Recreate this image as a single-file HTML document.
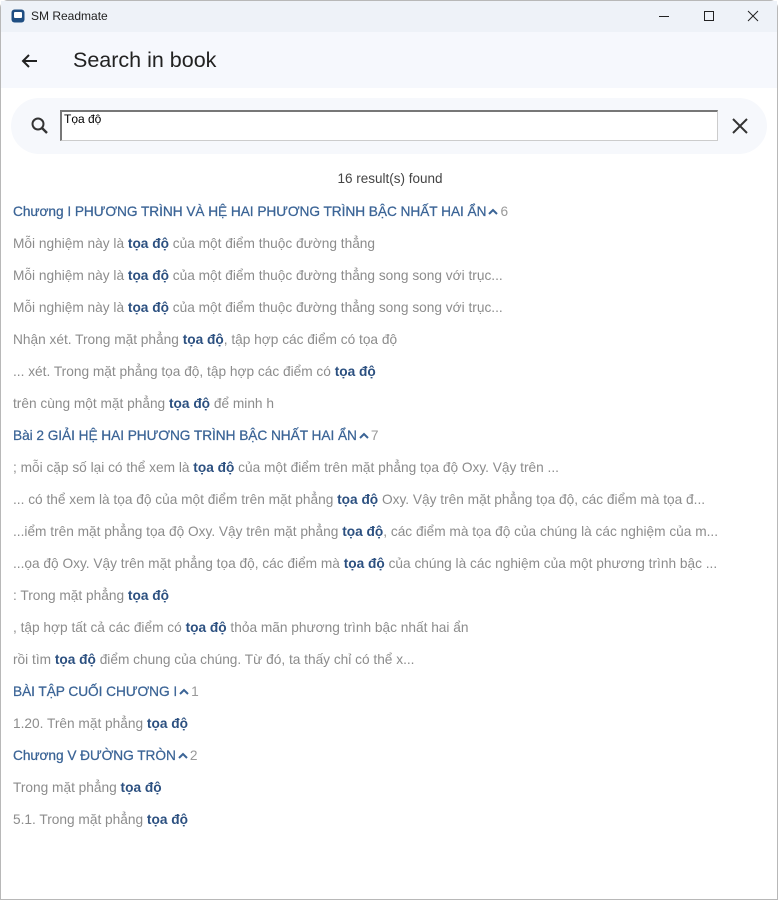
<!DOCTYPE html>
<html><head><meta charset="utf-8"><style>
*{margin:0;padding:0;box-sizing:border-box}
body{width:778px;height:900px;background:#fff;font-family:"Liberation Sans","Noto Sans CJK SC",sans-serif;position:relative;overflow:hidden;border:1px solid #b8b8b8;border-radius:8px 8px 0 0}
.tb{position:absolute;left:0;top:0;width:776px;height:31px;background:#eef2f8}
.tb .t{position:absolute;left:30px;top:8px;font-size:12px;color:#222}
.ab{position:absolute;left:0;top:31px;width:776px;height:56px;background:#f6f8fd}
.ab .h{position:absolute;left:72px;top:16px;font-size:21.5px;color:#222}
.pill{position:absolute;left:10px;top:97px;width:756px;height:56px;background:#f6f8fc;border-radius:28px}
.inp{position:absolute;left:59px;top:109px;width:658px;height:31px;background:#fff;border:1px solid #ccc;border-top:2px solid #777;border-left:2px solid #777;font-size:12px;padding-left:2px;line-height:14px}
.cnt{position:absolute;left:0;width:778px;top:170px;text-align:center;font-size:13.5px;color:#444}
.l{position:absolute;left:12px;font-size:13.7px;white-space:nowrap;color:#8c8c8c}
.l b{color:#2c5080}
.hd{color:#3b6496;-webkit-text-stroke:0.25px #3b6496;letter-spacing:-0.05px}
.hd span{color:#999;-webkit-text-stroke:0}
.hd svg{vertical-align:1px;margin:0 1px}
</style></head><body>
<div class="tb">
<svg style="position:absolute;left:10px;top:8px" width="14" height="14"><rect x="0.5" y="0.5" width="13" height="13" rx="3" fill="#1f4e82"/><rect x="3" y="3" width="8" height="6" rx="1" fill="#fff"/></svg>
<div class="t">SM Readmate</div>
<svg style="position:absolute;left:650px;top:8px" width="120" height="16"><line x1="8" y1="7.5" x2="18" y2="7.5" stroke="#222"/><rect x="53.5" y="2.5" width="9" height="9" fill="none" stroke="#222"/><path d="M97 2L107 12M107 2L97 12" stroke="#222"/></svg>
</div>
<div class="ab">
<svg style="position:absolute;left:19px;top:19px" width="20" height="20"><path d="M17 10H3M9 4L3 10L9 16" stroke="#222" stroke-width="2" fill="none"/></svg>
<div class="h">Search in book</div>
</div>
<div class="pill"></div>
<svg style="position:absolute;left:29px;top:115px" width="20" height="20"><circle cx="8" cy="8" r="5.5" stroke="#333" stroke-width="2" fill="none"/><path d="M12 12L17 17" stroke="#333" stroke-width="2.4"/></svg>
<div class="inp">Tọa độ</div>
<svg style="position:absolute;left:730px;top:116px" width="18" height="18"><path d="M2 2L16 16M16 2L2 16" stroke="#333" stroke-width="2"/></svg>
<div class="cnt">16 result(s) found</div>
<div class="l hd" style="top:203px">Chương I PHƯƠNG TRÌNH VÀ HỆ HAI PHƯƠNG TRÌNH BẬC NHẤT HAI ẨN<svg width="12" height="8"><path d="M2 7L6 3L10 7" stroke="#3b6496" stroke-width="2" fill="none"/></svg><span>6</span></div>
<div class="l" style="top:235px">Mỗi nghiệm này là <b>tọa độ</b> của một điểm thuộc đường thẳng</div>
<div class="l" style="top:267px">Mỗi nghiệm này là <b>tọa độ</b> của một điểm thuộc đường thẳng song song với trục...</div>
<div class="l" style="top:299px">Mỗi nghiệm này là <b>tọa độ</b> của một điểm thuộc đường thẳng song song với trục...</div>
<div class="l" style="top:331px">Nhận xét. Trong mặt phẳng <b>tọa độ</b>, tập hợp các điểm có tọa độ</div>
<div class="l" style="top:363px">... xét. Trong mặt phẳng tọa độ, tập hợp các điểm có <b>tọa độ</b></div>
<div class="l" style="top:395px">trên cùng một mặt phẳng <b>tọa độ</b> để minh h</div>
<div class="l hd" style="top:427px">Bài 2 GIẢI HỆ HAI PHƯƠNG TRÌNH BẬC NHẤT HAI ẨN<svg width="12" height="8"><path d="M2 7L6 3L10 7" stroke="#3b6496" stroke-width="2" fill="none"/></svg><span>7</span></div>
<div class="l" style="top:459px">; mỗi cặp số lại có thể xem là <b>tọa độ</b> của một điểm trên mặt phẳng tọa độ Oxy. Vậy trên ...</div>
<div class="l" style="top:491px">... có thể xem là tọa độ của một điểm trên mặt phẳng <b>tọa độ</b> Oxy. Vậy trên mặt phẳng tọa độ, các điểm mà tọa đ...</div>
<div class="l" style="top:523px">...iểm trên mặt phẳng tọa độ Oxy. Vậy trên mặt phẳng <b>tọa độ</b>, các điểm mà tọa độ của chúng là các nghiệm của m...</div>
<div class="l" style="top:555px">...ọa độ Oxy. Vậy trên mặt phẳng tọa độ, các điểm mà <b>tọa độ</b> của chúng là các nghiệm của một phương trình bậc ...</div>
<div class="l" style="top:587px">: Trong mặt phẳng <b>tọa độ</b></div>
<div class="l" style="top:619px">, tập hợp tất cả các điểm có <b>tọa độ</b> thỏa mãn phương trình bậc nhất hai ẩn</div>
<div class="l" style="top:651px">rồi tìm <b>tọa độ</b> điểm chung của chúng. Từ đó, ta thấy chỉ có thể x...</div>
<div class="l hd" style="top:683px">BÀI TẬP CUỐI CHƯƠNG I<svg width="12" height="8"><path d="M2 7L6 3L10 7" stroke="#3b6496" stroke-width="2" fill="none"/></svg><span>1</span></div>
<div class="l" style="top:715px">1.20. Trên mặt phẳng <b>tọa độ</b></div>
<div class="l hd" style="top:747px">Chương V ĐƯỜNG TRÒN<svg width="12" height="8"><path d="M2 7L6 3L10 7" stroke="#3b6496" stroke-width="2" fill="none"/></svg><span>2</span></div>
<div class="l" style="top:779px">Trong mặt phẳng <b>tọa độ</b></div>
<div class="l" style="top:811px">5.1. Trong mặt phẳng <b>tọa độ</b></div>
</body></html>
